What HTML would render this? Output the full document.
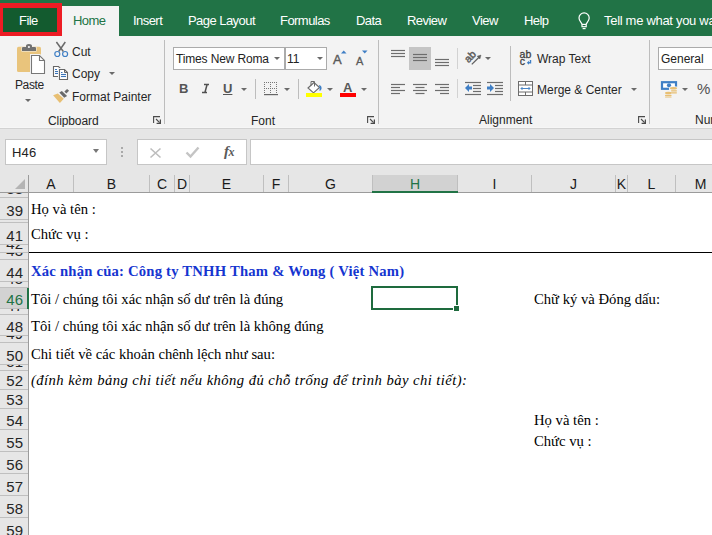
<!DOCTYPE html>
<html><head><meta charset="utf-8">
<style>
*{margin:0;padding:0;box-sizing:border-box}
html,body{width:712px;height:535px;overflow:hidden;background:#fff;font-family:"Liberation Sans",sans-serif}
.a{position:absolute}
.tabbar{left:0;top:0;width:712px;height:36px;background:#217346}
.tab{position:absolute;top:14px;font-size:13px;letter-spacing:-0.55px;color:#fff;white-space:nowrap;line-height:13px}
.ribbon{left:0;top:36px;width:712px;height:93px;background:#f3f3f3}
.ui{position:absolute;font-size:12px;color:#262626;white-space:nowrap;line-height:13px}
.sep{position:absolute;width:1px;background:#bdbdbd}
.arr{position:absolute;width:0;height:0;border-left:3px solid transparent;border-right:3px solid transparent;border-top:3.5px solid #6a6a6a}
.fbar{left:0;top:129px;width:712px;height:63px;background:#e6e6e6}
.cell{position:absolute;font-family:"Liberation Serif",serif;font-size:14.67px;color:#000;white-space:nowrap;line-height:16px}
.rh{position:absolute;left:0;width:28px;font-size:15px;line-height:16px;color:#262626;text-align:right;padding-right:6px;overflow:hidden;background:#e6e6e6;border-bottom:1px solid #bfbfbf}
.ch{position:absolute;top:175px;height:17px;font-size:14px;color:#1a1a1a;text-align:center;line-height:19px;border-right:1px solid #bfbfbf}
</style></head><body>
<!-- TAB BAR -->
<div class="a tabbar"></div>
<div class="a" style="left:0;top:3px;width:62px;height:34px;background:#ed1c24"></div>
<div class="a" style="left:3px;top:8px;width:54px;height:24px;background:#135b2f"></div>
<div class="tab" style="left:19px">File</div>
<div class="a" style="left:62px;top:6px;width:57px;height:30px;background:#f3f3f3"></div>
<div class="tab" style="left:73px;color:#217346">Home</div>
<div class="tab" style="left:133px">Insert</div>
<div class="tab" style="left:188px">Page Layout</div>
<div class="tab" style="left:280px">Formulas</div>
<div class="tab" style="left:356px">Data</div>
<div class="tab" style="left:407px">Review</div>
<div class="tab" style="left:472px">View</div>
<div class="tab" style="left:524px">Help</div>
<svg class="a" style="left:576px;top:12px" width="16" height="18" viewBox="0 0 16 18"><path d="M6 12.2 C5.4 10.3 3 8.8 3 6 A5.1 5.1 0 0 1 13.2 6 C13.2 8.8 10.8 10.3 10.2 12.2" fill="none" stroke="#fff" stroke-width="1.2"/><rect x="6" y="12.4" width="4.2" height="2.3" fill="none" stroke="#fff" stroke-width="1.2"/><line x1="6.6" y1="16.6" x2="9.6" y2="16.6" stroke="#fff" stroke-width="1.2"/></svg>
<div class="tab" style="left:604px;letter-spacing:-0.3px">Tell me what you want to do</div>

<!-- RIBBON -->
<div class="a ribbon"></div>
<!-- Clipboard group -->
<svg class="a" style="left:14px;top:42px" width="34" height="34" viewBox="0 0 34 34">
 <rect x="3" y="4.8" width="24" height="25.2" rx="1.6" fill="#e9c47c"/>
 <path d="M7.5 9.5 V5 H11.5 V3.5 Q11.5 1.5 14.9 1.5 Q18.5 1.5 18.5 3.5 V5 H22.5 V9.5 Z" fill="#f3f3f3"/>
 <path d="M8 9 V6 Q8 5 9 5 H12 V4 Q12 2 14.9 2 Q18 2 18 4 V5 H21 Q22 5 22 6 V9 Z" fill="#707070"/>
 <circle cx="14.9" cy="5" r="1.1" fill="#f3f3f3"/>
 <path d="M17.5 13.5 H25.5 L30.5 18.5 V31.5 H17.5 Z" fill="#f3f3f3" stroke="#f3f3f3" stroke-width="3"/>
 <path d="M17.5 13.5 H25.5 L30.5 18.5 V31.5 H17.5 Z" fill="#fff" stroke="#777" stroke-width="1.1"/>
 <path d="M25.5 13.5 V18.5 H30.5" fill="none" stroke="#777" stroke-width="1.1"/>
</svg>
<div class="ui" style="left:15px;top:79px;letter-spacing:-0.4px">Paste</div>
<div class="arr" style="left:25px;top:99px"></div>
<svg class="a" style="left:53px;top:41px" width="16" height="17" viewBox="0 0 16 17">
 <line x1="3.4" y1="1" x2="10.3" y2="10.5" stroke="#6a6a6a" stroke-width="1.5"/>
 <line x1="12.3" y1="1" x2="5.7" y2="10.5" stroke="#6a6a6a" stroke-width="1.5"/>
 <circle cx="4.3" cy="13" r="2.5" fill="#f3f3f3" stroke="#3f7fc5" stroke-width="1.2"/>
 <circle cx="12.1" cy="13" r="2.5" fill="#f3f3f3" stroke="#3f7fc5" stroke-width="1.2"/>
</svg>
<div class="ui" style="left:72px;top:46px">Cut</div>
<svg class="a" style="left:50px;top:63px" width="20" height="20" viewBox="0 0 20 20">
 <path d="M3.5 3.5 H8.5 L11.5 6.5 V13.5 H3.5 Z" fill="#fff" stroke="#666" stroke-width="1.1"/>
 <g stroke="#3a74b8" stroke-width="1.1"><line x1="5" y1="6.5" x2="7" y2="6.5"/><line x1="5" y1="8.5" x2="8" y2="8.5"/><line x1="5" y1="10.5" x2="8" y2="10.5"/></g>
 <path d="M9.5 6.5 H14.5 L17.5 9.5 V16.5 H9.5 Z" fill="#fff" stroke="#f3f3f3" stroke-width="3"/>
 <path d="M9.5 6.5 H14.5 L17.5 9.5 V16.5 H9.5 Z" fill="#fff" stroke="#666" stroke-width="1.1"/>
 <path d="M14.5 6.5 V9.5 H17.5" fill="none" stroke="#666" stroke-width="1"/>
 <g stroke="#3a74b8" stroke-width="1.1"><line x1="11" y1="9.5" x2="12.5" y2="9.5"/><line x1="11" y1="11.5" x2="16" y2="11.5"/><line x1="11" y1="13.5" x2="16" y2="13.5"/></g>
</svg>
<div class="ui" style="left:72px;top:68px">Copy</div>
<div class="arr" style="left:109px;top:72px"></div>
<svg class="a" style="left:50px;top:85px" width="22" height="22" viewBox="0 0 22 22">
 <path d="M3.1 10.3 L7.8 8.6 L13.8 13.8 L9.9 17.9 Z" fill="#e8bf73"/>
 <path d="M9.3 7.4 L11.9 5.9 L17.1 10.9 L14.2 12.8 Z" fill="#6a6a6a"/>
 <path d="M14.4 6.6 L17.1 3.9 L19.1 5.8 L16.3 8.4 Z" fill="#6a6a6a"/>
</svg>
<div class="ui" style="left:72px;top:91px">Format Painter</div>
<div class="ui" style="left:48px;top:115px;letter-spacing:-0.1px">Clipboard</div>
<svg class="a" style="left:153px;top:116px" width="8" height="8" viewBox="0 0 8 8"><path d="M0.6 7 V0.6 H7" fill="none" stroke="#4a4a4a" stroke-width="1.1"/><path d="M3 3 L6.6 6.6" fill="none" stroke="#4a4a4a" stroke-width="1.1"/><path d="M7.4 3.6 V7.4 H3.6" fill="none" stroke="#4a4a4a" stroke-width="1.3"/></svg>
<div class="sep" style="left:164px;top:40px;height:84px"></div>

<!-- Font group -->
<div class="a" style="left:173px;top:47px;width:112px;height:23px;background:#fff;border:1px solid #ababab"></div>
<div class="ui" style="left:176px;top:53px;color:#222;letter-spacing:-0.15px">Times New Roma</div>
<div class="arr" style="left:274px;top:57px"></div>
<div class="a" style="left:285px;top:47px;width:42px;height:23px;background:#fff;border:1px solid #ababab"></div>
<div class="ui" style="left:287px;top:53px;color:#222">11</div>
<div class="arr" style="left:317px;top:57px"></div>
<div class="ui" style="left:333px;top:53px;font-size:13px;color:#595959;-webkit-text-stroke:0.4px #595959">A</div>
<svg class="a" style="left:341px;top:50px" width="6" height="4" viewBox="0 0 6 4"><path d="M0 3.5 L2.75 0.5 L5.5 3.5 Z" fill="#3f7fc5"/></svg>
<div class="ui" style="left:356px;top:55px;font-size:11px;color:#595959;-webkit-text-stroke:0.3px #595959">A</div>
<svg class="a" style="left:362px;top:50px" width="6" height="4" viewBox="0 0 6 4"><path d="M0 0.5 L5.5 0.5 L2.75 3.5 Z" fill="#3f7fc5"/></svg>
<div class="ui" style="left:179px;top:82px;font-weight:bold;color:#555;font-size:13px">B</div>
<svg class="a" style="left:200px;top:82px" width="11" height="12" viewBox="0 0 11 12"><path d="M4 2.5 H9 M2 10.5 H7 M7.1 2.5 L4.9 10.5" fill="none" stroke="#505050" stroke-width="1.5"/></svg>
<div class="ui" style="left:223px;top:82px;color:#555;font-size:13px;font-weight:bold;text-decoration:underline">U</div>
<div class="arr" style="left:241px;top:88px"></div>
<div class="sep" style="left:255px;top:79px;height:20px"></div>
<svg class="a" style="left:264px;top:82px" width="14" height="14" viewBox="0 0 14 14"><g fill="#777"><rect x="0" y="0" width="1" height="1"/><rect x="0" y="6" width="1" height="1"/><rect x="2" y="0" width="1" height="1"/><rect x="2" y="6" width="1" height="1"/><rect x="4" y="0" width="1" height="1"/><rect x="4" y="6" width="1" height="1"/><rect x="6" y="0" width="1" height="1"/><rect x="6" y="6" width="1" height="1"/><rect x="8" y="0" width="1" height="1"/><rect x="8" y="6" width="1" height="1"/><rect x="10" y="0" width="1" height="1"/><rect x="10" y="6" width="1" height="1"/><rect x="12" y="0" width="1" height="1"/><rect x="12" y="6" width="1" height="1"/><rect x="0" y="2" width="1" height="1"/><rect x="6" y="2" width="1" height="1"/><rect x="12" y="2" width="1" height="1"/><rect x="0" y="4" width="1" height="1"/><rect x="6" y="4" width="1" height="1"/><rect x="12" y="4" width="1" height="1"/><rect x="0" y="6" width="1" height="1"/><rect x="6" y="6" width="1" height="1"/><rect x="12" y="6" width="1" height="1"/><rect x="0" y="8" width="1" height="1"/><rect x="6" y="8" width="1" height="1"/><rect x="12" y="8" width="1" height="1"/><rect x="0" y="10" width="1" height="1"/><rect x="6" y="10" width="1" height="1"/><rect x="12" y="10" width="1" height="1"/></g><rect x="0" y="12" width="14" height="1.2" fill="#666"/></svg>
<div class="arr" style="left:284px;top:88px"></div>
<div class="sep" style="left:298px;top:79px;height:20px"></div>
<svg class="a" style="left:305px;top:80px" width="18" height="17" viewBox="0 0 18 17">
 <path d="M3 8 L9 2.5 L14.5 7.5 L8.5 12.8 Z" fill="#fff" stroke="#6a6a6a" stroke-width="1.1"/>
 <path d="M6 5.5 V1.5 H9.5 V6.5" fill="none" stroke="#6a6a6a" stroke-width="1"/>
 <path d="M14 5 Q17 5.5 16.5 9 Q15.5 11 14.5 11 Q15 8 14 5 Z" fill="#3f7fc5"/>
 <rect x="1" y="13" width="16" height="4" fill="#ffff00"/>
</svg>
<div class="arr" style="left:327px;top:88px"></div>
<div class="ui" style="left:343px;top:81px;font-size:13px;font-weight:bold;color:#595959">A</div>
<div class="a" style="left:340px;top:93px;width:16px;height:4px;background:#ff0000"></div>
<div class="arr" style="left:361px;top:88px"></div>
<div class="ui" style="left:251px;top:115px">Font</div>
<svg class="a" style="left:367px;top:116px" width="8" height="8" viewBox="0 0 8 8"><path d="M0.6 7 V0.6 H7" fill="none" stroke="#4a4a4a" stroke-width="1.1"/><path d="M3 3 L6.6 6.6" fill="none" stroke="#4a4a4a" stroke-width="1.1"/><path d="M7.4 3.6 V7.4 H3.6" fill="none" stroke="#4a4a4a" stroke-width="1.3"/></svg>
<div class="sep" style="left:378px;top:40px;height:84px"></div>

<!-- Alignment group -->
<svg class="a" style="left:390px;top:46px" width="116" height="52" viewBox="0 0 116 52">
 <g stroke="#6d6d6d" stroke-width="1.2">
  <line x1="1" y1="4.5" x2="15" y2="4.5"/><line x1="1" y1="7.5" x2="15" y2="7.5"/><line x1="1" y1="10.5" x2="15" y2="10.5"/>
 </g>
 <rect x="19" y="1" width="22" height="23" fill="#c5c5c5"/>
 <g stroke="#6d6d6d" stroke-width="1.2">
  <line x1="23" y1="8.5" x2="37" y2="8.5"/><line x1="23" y1="11.5" x2="37" y2="11.5"/><line x1="23" y1="14.5" x2="37" y2="14.5"/>
  <line x1="45" y1="13.5" x2="59" y2="13.5"/><line x1="45" y1="16.5" x2="59" y2="16.5"/><line x1="45" y1="19.5" x2="59" y2="19.5"/>
  <line x1="1" y1="38.5" x2="15" y2="38.5"/><line x1="1" y1="41.5" x2="10" y2="41.5"/><line x1="1" y1="44.5" x2="15" y2="44.5"/><line x1="1" y1="47.5" x2="10" y2="47.5"/>
  <line x1="23" y1="38.5" x2="37" y2="38.5"/><line x1="25.5" y1="41.5" x2="34.5" y2="41.5"/><line x1="23" y1="44.5" x2="37" y2="44.5"/><line x1="25.5" y1="47.5" x2="34.5" y2="47.5"/>
  <line x1="45" y1="38.5" x2="59" y2="38.5"/><line x1="50" y1="41.5" x2="59" y2="41.5"/><line x1="45" y1="44.5" x2="59" y2="44.5"/><line x1="50" y1="47.5" x2="59" y2="47.5"/>
 </g>
 <line x1="67.5" y1="2" x2="67.5" y2="23" stroke="#d2d2d2"/>
 <line x1="67.5" y1="33" x2="67.5" y2="54" stroke="#d2d2d2"/>
 <text x="80.3" y="14" font-size="10.5" fill="#5f5f5f" stroke="#5f5f5f" stroke-width="0.5" font-family="Liberation Sans" text-anchor="middle" transform="rotate(-45 80.3 10.8)">ab</text>
 <path d="M81.8 18.4 L89.5 10.7" fill="none" stroke="#5f5f5f" stroke-width="1.3"/>
 <path d="M91 9.1 L87.2 10.2 L89.9 12.9 Z" fill="#5f5f5f" stroke="#5f5f5f" stroke-width="0.5"/>
 <g stroke="#6d6d6d" stroke-width="1.2">
  <line x1="75" y1="36.5" x2="91" y2="36.5"/><line x1="83" y1="39.5" x2="91" y2="39.5"/><line x1="83" y1="42.5" x2="91" y2="42.5"/><line x1="83" y1="45.5" x2="91" y2="45.5"/><line x1="75" y1="48.5" x2="91" y2="48.5"/>
  <line x1="97" y1="36.5" x2="113" y2="36.5"/><line x1="105" y1="39.5" x2="113" y2="39.5"/><line x1="105" y1="42.5" x2="113" y2="42.5"/><line x1="105" y1="45.5" x2="113" y2="45.5"/><line x1="97" y1="48.5" x2="113" y2="48.5"/>
 </g>
 <path d="M75 42 L79 38 L79 40.6 L82 40.6 L82 43.4 L79 43.4 L79 46 Z" fill="#3f7fc5"/>
 <path d="M104 42 L100 38 L100 40.6 L97 40.6 L97 43.4 L100 43.4 L100 46 Z" fill="#3f7fc5"/>
</svg>
<div class="arr" style="left:485px;top:57px"></div>
<div class="sep" style="left:510px;top:46px;height:55px"></div>
<svg class="a" style="left:519px;top:50px" width="14" height="16" viewBox="0 0 14 16"><text x="0.6" y="7.7" font-size="10.5" fill="#3f3f3f" stroke="#3f3f3f" stroke-width="0.3" font-family="Liberation Sans">ab</text><text x="0.8" y="14.9" font-size="10.5" fill="#3f3f3f" stroke="#3f3f3f" stroke-width="0.3" font-family="Liberation Sans">c</text><path d="M11.5 10 V12.8 H9" fill="none" stroke="#3f7fc5" stroke-width="1.4"/><path d="M7.8 12.8 L10 10.8 L10 14.8 Z" fill="#3f7fc5"/></svg>
<div class="ui" style="left:537px;top:53px">Wrap Text</div>
<svg class="a" style="left:518px;top:81px" width="15" height="15" viewBox="0 0 15 15"><rect x="0.5" y="0.5" width="14" height="14" fill="#fff" stroke="#6d6d6d"/><line x1="0.5" y1="4" x2="14.5" y2="4" stroke="#6d6d6d"/><line x1="0.5" y1="11" x2="14.5" y2="11" stroke="#6d6d6d"/><line x1="7.5" y1="0.5" x2="7.5" y2="4" stroke="#6d6d6d"/><line x1="7.5" y1="11" x2="7.5" y2="14.5" stroke="#6d6d6d"/><path d="M3 7.5 L12 7.5 M4.5 6 L3 7.5 L4.5 9 M10.5 6 L12 7.5 L10.5 9" fill="none" stroke="#4a86c6"/></svg>
<div class="ui" style="left:537px;top:84px">Merge &amp; Center</div>
<div class="arr" style="left:631px;top:88px"></div>
<div class="ui" style="left:479px;top:114px">Alignment</div>
<svg class="a" style="left:638px;top:116px" width="8" height="8" viewBox="0 0 8 8"><path d="M0.6 7 V0.6 H7" fill="none" stroke="#4a4a4a" stroke-width="1.1"/><path d="M3 3 L6.6 6.6" fill="none" stroke="#4a4a4a" stroke-width="1.1"/><path d="M7.4 3.6 V7.4 H3.6" fill="none" stroke="#4a4a4a" stroke-width="1.3"/></svg>
<div class="sep" style="left:649px;top:40px;height:84px"></div>

<!-- Number group -->
<div class="a" style="left:658px;top:47px;width:80px;height:23px;background:#fff;border:1px solid #ababab"></div>
<div class="ui" style="left:661px;top:53px;color:#222">General</div>
<svg class="a" style="left:660px;top:80px" width="18" height="18" viewBox="0 0 18 18">
<rect x="2" y="2.2" width="14" height="6.6" fill="#fff" stroke="#3f7fc5" stroke-width="2.2"/>
<circle cx="9" cy="5.3" r="2.1" fill="#3f7fc5"/>
<g fill="#f3f3f3"><ellipse cx="13.5" cy="8.3" rx="4.6" ry="2"/><rect x="9" y="8.5" width="9" height="5"/><ellipse cx="8.3" cy="13" rx="4.3" ry="2"/><rect x="4" y="13" width="8.6" height="5"/></g>
<g fill="#e8bf73">
<ellipse cx="13.5" cy="8.3" rx="3.6" ry="1.2"/><rect x="11" y="10.2" width="6" height="1.2" rx="0.6"/><rect x="11" y="12.2" width="6" height="1.2" rx="0.6"/>
<ellipse cx="8.3" cy="13" rx="3.3" ry="1.2"/><rect x="5" y="14.8" width="6.6" height="1.2" rx="0.6"/><rect x="5" y="16.4" width="6.6" height="1.2" rx="0.6"/>
</g></svg>
<div class="arr" style="left:682px;top:88px"></div>
<div class="ui" style="left:697px;top:82px;font-size:15px;color:#505050">%</div>
<div class="ui" style="left:695px;top:114px">Number</div>

<!-- FORMULA BAR AREA -->
<div class="a fbar"></div>
<div class="a" style="left:0;top:127px;width:712px;height:1px;background:#f6f6f6"></div>
<div class="a" style="left:0;top:128px;width:712px;height:1px;background:#d2d2d2"></div>
<div class="a" style="left:5px;top:139px;width:102px;height:26px;background:#fff;border:1px solid #c6c6c6"></div>
<div class="ui" style="left:12px;top:146px;font-size:13px;color:#222;letter-spacing:0.2px">H46</div>
<div class="arr" style="left:93px;top:149px;border-top-color:#777;border-left-width:3.5px;border-right-width:3.5px;border-top-width:4px"></div>
<div class="a" style="left:121px;top:147px;width:2px;height:2px;background:#a9a9a9"></div>
<div class="a" style="left:121px;top:151px;width:2px;height:2px;background:#a9a9a9"></div>
<div class="a" style="left:121px;top:155px;width:2px;height:2px;background:#a9a9a9"></div>
<div class="a" style="left:137px;top:139px;width:110px;height:26px;background:#fff;border:1px solid #c6c6c6"></div>
<svg class="a" style="left:149px;top:147px" width="13" height="12" viewBox="0 0 13 12"><path d="M1.5 1.5 L11.5 10.5 M11.5 1.5 L1.5 10.5" stroke="#bdbdbd" stroke-width="1.6"/></svg>
<svg class="a" style="left:185px;top:146px" width="15" height="13" viewBox="0 0 15 13"><path d="M1.5 6.5 L5.5 10.5 L13.5 1.5" fill="none" stroke="#c4c4c4" stroke-width="2.4"/></svg>
<div class="ui" style="left:224px;top:145px;font-family:'Liberation Serif',serif;font-style:italic;font-weight:bold;font-size:15px;color:#5a5a5a;letter-spacing:-0.6px">f<span style="font-size:12px">x</span></div>
<div class="a" style="left:250px;top:139px;width:470px;height:26px;background:#fff;border:1px solid #c6c6c6"></div>

<!-- COLUMN HEADERS -->
<div class="a" style="left:0;top:192px;width:712px;height:1px;background:#9b9b9b"></div>
<svg class="a" style="left:15px;top:179px" width="10" height="10" viewBox="0 0 10 10"><path d="M10 0 L10 10 L0 10 Z" fill="#b4b4b4"/></svg>
<div class="a" style="left:28px;top:175px;width:1px;height:360px;background:#9b9b9b"></div>
<div class="ch" style="left:29px;width:45px">A</div>
<div class="ch" style="left:74px;width:76px">B</div>
<div class="ch" style="left:150px;width:25px">C</div>
<div class="ch" style="left:175px;width:15px">D</div>
<div class="ch" style="left:190px;width:74px">E</div>
<div class="ch" style="left:264px;width:25px">F</div>
<div class="ch" style="left:289px;width:83px;border-right:none">G</div>
<div class="ch" style="left:372px;width:86px;background:#d2d2d2;color:#217346;border-left:1px solid #bfbfbf">H</div>
<div class="a" style="left:372px;top:191px;width:86px;height:2px;background:#217346"></div>
<div class="ch" style="left:458px;width:74px">I</div>
<div class="ch" style="left:532px;width:84px">J</div>
<div class="ch" style="left:616px;width:12px">K</div>
<div class="ch" style="left:628px;width:48px">L</div>
<div class="ch" style="left:676px;width:50px">M</div>

<!-- ROW HEADERS -->
<div id="rows">
<div class="rh" style="top:193px;height:5px;background:#e6e6e6"><span style="position:absolute;right:5px;top:-12px;color:#262626">38</span></div>
<div class="rh" style="top:198px;height:22px;background:#e6e6e6"><span style="position:absolute;right:5px;top:5px;color:#262626">39</span></div>
<div class="rh" style="top:220px;height:3px;background:#e6e6e6"><span style="position:absolute;right:5px;top:-14px;color:#262626">40</span></div>
<div class="rh" style="top:223px;height:22px;background:#e6e6e6"><span style="position:absolute;right:5px;top:5px;color:#262626">41</span></div>
<div class="rh" style="top:245px;height:8px;background:#e6e6e6"><span style="position:absolute;right:5px;top:-9px;color:#262626">42</span></div>
<div class="rh" style="top:253px;height:7px;background:#e6e6e6"><span style="position:absolute;right:5px;top:-10px;color:#262626">43</span></div>
<div class="rh" style="top:260px;height:22px;background:#e6e6e6"><span style="position:absolute;right:5px;top:5px;color:#262626">44</span></div>
<div class="rh" style="top:282px;height:6px;background:#e6e6e6"><span style="position:absolute;right:5px;top:-11px;color:#262626">45</span></div>
<div class="rh" style="top:288px;height:21px;background:#d2d2d2"><span style="position:absolute;right:5px;top:4px;color:#217346">46</span></div>
<div class="a" style="left:27px;top:288px;width:2px;height:21px;background:#217346"></div>
<div class="rh" style="top:309px;height:6px;background:#e6e6e6"><span style="position:absolute;right:5px;top:-11px;color:#262626">47</span></div>
<div class="rh" style="top:315px;height:21px;background:#e6e6e6"><span style="position:absolute;right:5px;top:4px;color:#262626">48</span></div>
<div class="rh" style="top:336px;height:7px;background:#e6e6e6"><span style="position:absolute;right:5px;top:-10px;color:#262626">49</span></div>
<div class="rh" style="top:343px;height:22px;background:#e6e6e6"><span style="position:absolute;right:5px;top:5px;color:#262626">50</span></div>
<div class="rh" style="top:365px;height:6px;background:#e6e6e6"><span style="position:absolute;right:5px;top:-11px;color:#262626">51</span></div>
<div class="rh" style="top:371px;height:19px;background:#e6e6e6"><span style="position:absolute;right:5px;top:2px;color:#262626">52</span></div>
<div class="rh" style="top:390px;height:19px;background:#e6e6e6"><span style="position:absolute;right:5px;top:2px;color:#262626">53</span></div>
<div class="rh" style="top:409px;height:21px;background:#e6e6e6"><span style="position:absolute;right:5px;top:4px;color:#262626">54</span></div>
<div class="rh" style="top:430px;height:22px;background:#e6e6e6"><span style="position:absolute;right:5px;top:5px;color:#262626">55</span></div>
<div class="rh" style="top:452px;height:22px;background:#e6e6e6"><span style="position:absolute;right:5px;top:5px;color:#262626">56</span></div>
<div class="rh" style="top:474px;height:22px;background:#e6e6e6"><span style="position:absolute;right:5px;top:5px;color:#262626">57</span></div>
<div class="rh" style="top:496px;height:22px;background:#e6e6e6"><span style="position:absolute;right:5px;top:5px;color:#262626">58</span></div>
<div class="rh" style="top:518px;height:22px;background:#e6e6e6"><span style="position:absolute;right:5px;top:5px;color:#262626">59</span></div>
</div>

<!-- CELLS -->
<div class="a" style="left:29px;top:252px;width:683px;height:1px;background:#000"></div>
<div class="cell" style="left:31px;top:201px">Họ và tên :</div>
<div class="cell" style="left:31px;top:226px">Chức vụ :</div>
<div class="cell" style="left:31px;top:263px;font-weight:bold;color:#1535d0;letter-spacing:0.21px">Xác nhận của: Công ty TNHH Tham &amp; Wong ( Việt Nam)</div>
<div class="cell" style="left:31px;top:291px">Tôi / chúng tôi xác nhận số dư trên là đúng</div>
<div class="cell" style="left:31px;top:318px">Tôi / chúng tôi xác nhận số dư trên là không đúng</div>
<div class="cell" style="left:31px;top:346px">Chi tiết về các khoản chênh lệch như sau:</div>
<div class="cell" style="left:31px;top:372px;font-style:italic;letter-spacing:0.43px">(đính kèm bảng chi tiết nếu không đủ chỗ trống để trình bày chi tiết):</div>
<div class="cell" style="left:534px;top:291px">Chữ ký và Đóng dấu:</div>
<div class="cell" style="left:534px;top:412px">Họ và tên :</div>
<div class="cell" style="left:534px;top:433px">Chức vụ :</div>
<div class="a" style="left:371px;top:286px;width:87px;height:24px;border:2px solid #1e6b3e"></div>
<div class="a" style="left:453px;top:305px;width:7px;height:7px;background:#fff"></div>
<div class="a" style="left:454px;top:306px;width:5px;height:5px;background:#1e6b3e"></div>
</body></html>
